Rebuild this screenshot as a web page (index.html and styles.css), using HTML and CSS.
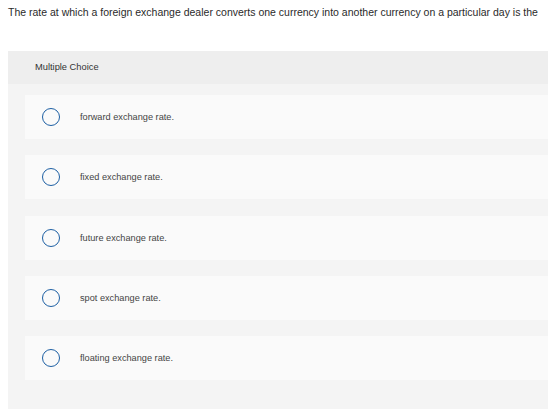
FILE: index.html
```html
<!DOCTYPE html>
<html>

<head>
    <title>Multiple Choice</title>
    <meta name="viewport" content="width=device-width, initial-scale=1.0">
    <link rel="stylesheet" href="styles.css">
</head>

<body>
    <p class="prompt">The rate at which a foreign exchange dealer converts one currency into another currency on a particular day is the</p>

    <div class="question">
        <div class="question-head">Multiple Choice</div>
        <div class="choices">
            <label class="choice">
                <span class="radio"></span>
                <span class="choice-text">forward exchange rate.</span>
            </label>
            <label class="choice">
                <span class="radio"></span>
                <span class="choice-text">fixed exchange rate.</span>
            </label>
            <label class="choice">
                <span class="radio"></span>
                <span class="choice-text">future exchange rate.</span>
            </label>
            <label class="choice">
                <span class="radio"></span>
                <span class="choice-text">spot exchange rate.</span>
            </label>
            <label class="choice">
                <span class="radio"></span>
                <span class="choice-text">floating exchange rate.</span>
            </label>
        </div>
    </div>
</body>

</html>
```

FILE: styles.css
```css
body {
    font-family: "Liberation Sans", Arial, sans-serif;
    color: #333;
    margin: 0;
    padding: 0 0 0 8px;
    background: #fff;
    overflow: hidden;
}

.prompt {
    font-size: 10.5px;
    line-height: 14px;
    margin: 0;
    padding-top: 5px;
    height: 51px;
    box-sizing: border-box;
    white-space: nowrap;
    color: #2a2a2a;
}

.question {
    background-color: #f4f4f4;
    padding-bottom: 40px;
}

.question-head {
    background-color: #eeeeee;
    height: 33px;
    line-height: 33px;
    padding-left: 27px;
    font-size: 9.3px;
}

.choices {
    display: flex;
    flex-direction: column;
    gap: 16.25px;
    padding: 11px 0 0 17px;
}

.choice {
    display: flex;
    align-items: center;
    height: 44px;
    background-color: #fafafa;
    padding-left: 17px;
    cursor: pointer;
}

.radio {
    width: 16px;
    height: 16px;
    border: 1.5px solid #1d5fa3;
    border-radius: 50%;
    flex-shrink: 0;
}

.choice-text {
    font-size: 9.2px;
    margin-left: 20px;
    color: #444;
}
```
